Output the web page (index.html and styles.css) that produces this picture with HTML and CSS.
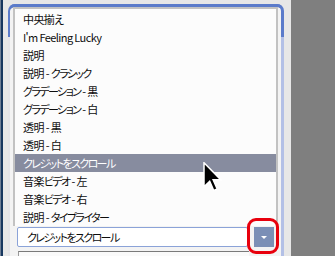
FILE: index.html
```html
<!DOCTYPE html>
<html lang="ja">
<head>
<meta charset="utf-8"/>
<meta content="width=device-width, initial-scale=1.0" name="viewport"/>
<title>表示スタイル</title>
<link rel="stylesheet" href="styles.css">
</head>
<body>
<div class="screen">
  <div class="edge"></div>
  <div class="panel">
    <div class="frame">
      <ul class="list">
        <li>中央揃え</li>
        <li>I'm Feeling Lucky</li>
        <li>説明</li>
        <li>説明 - <span class="kana">クラシック</span></li>
        <li><span class="kana">グラデーション</span> - 黒</li>
        <li><span class="kana">グラデーション</span> - 白</li>
        <li>透明 - 黒</li>
        <li>透明 - 白</li>
        <li class="selected"><span class="kana">クレジットをスクロール</span></li>
        <li>音楽<span class="kana">ビデオ</span> - 左</li>
        <li>音楽<span class="kana">ビデオ</span> - 右</li>
        <li>説明 - <span class="kana">タイプライター</span></li>
      </ul>
      <div class="combo-row">
        <div class="combo"><span class="kana">クレジットをスクロール</span></div>
        <div class="drop-wrap">
          <div class="drop"><span class="arrow"></span></div>
          <div class="ring"></div>
        </div>
      </div>
      <div class="next-box"></div>
    </div>
  </div>
  <div class="side"></div>
</div>
<svg class="cursor" width="20" height="30" viewBox="0 0 13 20">
  <path d="M0.5 0.5 V16.5 L4.3 12.8 L7 19 L9.3 18 L6.6 11.9 H11.8 Z" fill="#000" stroke="#fff" stroke-width="1"/>
</svg>
</body>
</html>
```

FILE: styles.css
```css
body {
  margin: 0;
  background: #e7e7e7;
  font-family: "Noto Sans CJK JP", "Noto Sans", sans-serif;
  font-size: 11px;
  font-feature-settings: "palt";
  letter-spacing: -0.6px;
  color: #0d0d0d;
  overflow: hidden;
}
.kana {
  letter-spacing: -1.6px;
}
.screen {
  display: flex;
  height: 256px;
}
.edge {
  width: 2px;
  border-left: 1px solid #6f7f95;
  background: #17375f;
}
.panel {
  margin-left: 5px;
  width: 276px;
  padding-top: 4px;
}
.frame {
  position: relative;
  box-sizing: border-box;
  height: 252px;
  border-top: 3px solid #5b7bca;
  border-left: 2px solid #e4e4e8;
  border-right: 3px solid #b3c0e6;
  border-radius: 7px 7px 0 0;
  background: #f3f3f3;
  display: flex;
  flex-direction: column;
}
.frame::before {
  content: "";
  position: absolute;
  top: -3px;
  left: -2px;
  right: -3px;
  height: 30px;
  border: 3px solid #5b7bca;
  border-bottom: none;
  border-left-width: 2px;
  border-radius: 7px 7px 0 0;
}
.list {
  list-style: none;
  margin: 0 3px 0 3px;
  padding: 1px 0 0;
  border: 2px solid #c2c2c2;
  border-bottom: none;
  background: #fcfcfc;
  position: relative;
}
.list li {
  height: 18px;
  line-height: 18px;
  padding-left: 8px;
  white-space: nowrap;
}
.list li.selected {
  background: #878c9f;
  color: #fff;
}
.combo-row {
  display: flex;
  align-items: center;
  gap: 6px;
  margin: 1px 0 0 7px;
}
.combo {
  box-sizing: border-box;
  width: 231px;
  height: 20px;
  line-height: 18px;
  padding-left: 9px;
  border: 1px solid #8ba3d8;
  border-radius: 2px;
  background: #fff;
}
.drop-wrap {
  position: relative;
}
.drop {
  width: 20px;
  height: 20px;
  background: #7b8fb6;
  display: flex;
  align-items: center;
  justify-content: center;
}
.arrow {
  width: 0;
  height: 0;
  border-left: 3px solid transparent;
  border-right: 3px solid transparent;
  border-top: 3px solid #fff;
}
.ring {
  position: absolute;
  left: -7px;
  top: -9px;
  width: 32px;
  height: 36px;
  box-sizing: border-box;
  border: 3px solid #e8000d;
  border-radius: 9px;
}
.next-box {
  margin: 4px 0 0 8px;
  width: 230px;
  flex: 1;
  border-top: 1px solid #7a7a7a;
  border-left: 1px solid #9a9a9a;
  background: #fafafa;
}
.side {
  margin-left: 7px;
  width: 44px;
  background: #7f7f7f;
}
.cursor {
  position: absolute;
  left: 203px;
  top: 162px;
}
```
